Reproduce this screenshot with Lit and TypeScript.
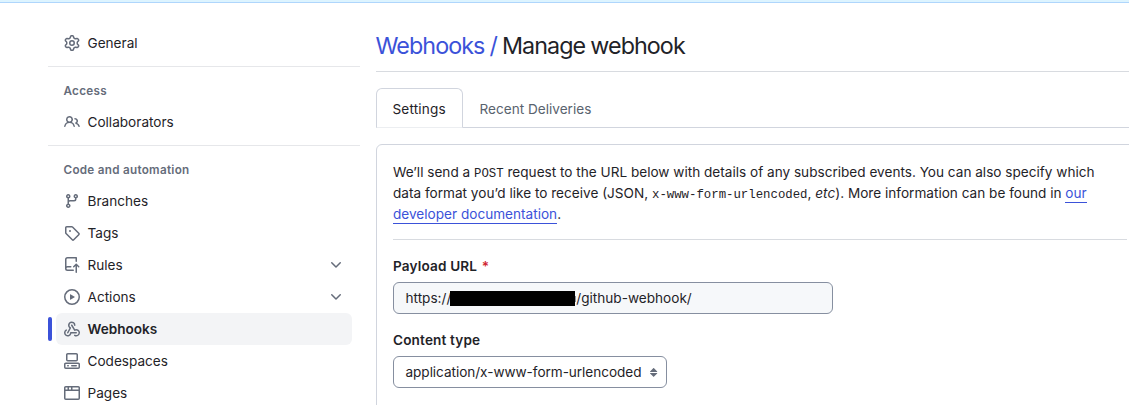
import { LitElement, html, css, svg } from "lit";
import { customElement, property } from "lit/decorators.js";

const ICONS: Record<string, string> = {
  gear: "M8 0a8.2 8.2 0 0 1 .701.031C9.444.095 9.99.645 10.16 1.29l.288 1.107c.018.066.079.158.212.224.231.114.454.243.668.386.123.082.233.09.299.071l1.103-.303c.644-.176 1.392.021 1.82.63.27.385.506.792.704 1.218.315.675.111 1.422-.364 1.891l-.814.806c-.049.048-.098.147-.088.294.016.257.016.515 0 .772-.01.147.038.246.088.294l.814.806c.475.469.679 1.216.364 1.891a7.977 7.977 0 0 1-.704 1.217c-.428.61-1.176.807-1.82.63l-1.102-.302c-.067-.019-.177-.011-.3.071a5.909 5.909 0 0 1-.668.386c-.133.066-.194.158-.211.224l-.29 1.106c-.168.646-.715 1.196-1.458 1.26a8.006 8.006 0 0 1-1.402 0c-.743-.064-1.289-.614-1.458-1.26l-.289-1.106c-.018-.066-.079-.158-.212-.224a5.738 5.738 0 0 1-.668-.386c-.123-.082-.233-.09-.299-.071l-1.103.303c-.644.176-1.392-.021-1.82-.63a8.12 8.12 0 0 1-.704-1.218c-.315-.675-.111-1.422.363-1.891l.815-.806c.05-.048.098-.147.088-.294a6.214 6.214 0 0 1 0-.772c.01-.147-.038-.246-.088-.294l-.815-.806C.635 6.045.431 5.298.746 4.623a7.92 7.92 0 0 1 .704-1.217c.428-.61 1.176-.807 1.82-.63l1.102.302c.067.019.177.011.3-.071.214-.143.437-.272.668-.386.133-.066.194-.158.211-.224l.29-1.106C6.009.645 6.556.095 7.299.03 7.53.01 7.764 0 8 0Zm-.571 1.525c-.036.003-.108.036-.137.146l-.289 1.105c-.147.561-.549.967-.998 1.189-.173.086-.34.183-.5.29-.417.278-.97.423-1.529.27l-1.103-.303c-.109-.03-.175.016-.195.045-.22.312-.412.644-.573.99-.014.031-.021.11.059.19l.815.806c.411.406.562.957.53 1.456a4.709 4.709 0 0 0 0 .582c.032.499-.119 1.05-.53 1.456l-.815.806c-.081.08-.073.159-.059.19.162.346.353.677.573.989.02.03.085.076.195.046l1.102-.303c.56-.153 1.113-.008 1.53.27.161.107.328.204.501.29.447.222.85.629.997 1.189l.289 1.105c.029.109.101.143.137.146a6.6 6.6 0 0 0 1.142 0c.036-.003.108-.036.137-.146l.289-1.105c.147-.561.549-.967.998-1.189.173-.086.34-.183.5-.29.417-.278.97-.423 1.529-.27l1.103.303c.109.029.175-.016.195-.045.22-.313.411-.644.573-.99.014-.031.021-.11-.059-.19l-.815-.806c-.411-.406-.562-.957-.53-1.456a4.709 4.709 0 0 0 0-.582c-.032-.499.119-1.05.53-1.456l.815-.806c.081-.08.073-.159.059-.19a6.464 6.464 0 0 0-.573-.989c-.02-.03-.085-.076-.195-.046l-1.102.303c-.56.153-1.113.008-1.53-.27a4.44 4.44 0 0 0-.501-.29c-.447-.222-.85-.629-.997-1.189l-.289-1.105c-.029-.11-.101-.143-.137-.146a6.6 6.6 0 0 0-1.142 0ZM11 8a3 3 0 1 1-6 0 3 3 0 0 1 6 0ZM9.5 8a1.5 1.5 0 1 0-3.001.001A1.5 1.5 0 0 0 9.5 8Z",
  people: "M2 5.5a3.5 3.5 0 1 1 5.898 2.549 5.508 5.508 0 0 1 3.034 4.084.75.75 0 1 1-1.482.235 4 4 0 0 0-7.9 0 .75.75 0 0 1-1.482-.236A5.507 5.507 0 0 1 3.102 8.05 3.493 3.493 0 0 1 2 5.5ZM11 4a3.001 3.001 0 0 1 2.22 5.018 5.01 5.01 0 0 1 2.56 3.012.749.749 0 0 1-.885.954.752.752 0 0 1-.549-.514 3.507 3.507 0 0 0-2.522-2.372.75.75 0 0 1-.574-.73v-.352a.75.75 0 0 1 .416-.672A1.5 1.5 0 0 0 11 5.5.75.75 0 0 1 11 4Zm-5.5-.5a2 2 0 1 0-.001 3.999A2 2 0 0 0 5.5 3.5Z",
  branch: "M9.5 3.25a2.25 2.25 0 1 1 3 2.122V6A2.5 2.5 0 0 1 10 8.5H6a1 1 0 0 0-1 1v1.128a2.251 2.251 0 1 1-1.5 0V5.372a2.25 2.25 0 1 1 1.5 0v1.836A2.493 2.493 0 0 1 6 7h4a1 1 0 0 0 1-1v-.628A2.25 2.25 0 0 1 9.5 3.25Zm-6 0a.75.75 0 1 0 1.5 0 .75.75 0 0 0-1.5 0Zm8.25-.75a.75.75 0 1 0 0 1.5.75.75 0 0 0 0-1.5ZM4.25 12a.75.75 0 1 0 0 1.5.75.75 0 0 0 0-1.5Z",
  tag: "M1 7.775V2.75C1 1.784 1.784 1 2.75 1h5.025c.464 0 .91.184 1.238.513l6.25 6.25a1.75 1.75 0 0 1 0 2.474l-5.026 5.026a1.75 1.75 0 0 1-2.474 0l-6.25-6.25A1.752 1.752 0 0 1 1 7.775Zm1.5 0c0 .066.026.13.073.177l6.25 6.25a.25.25 0 0 0 .354 0l5.025-5.025a.25.25 0 0 0 0-.354l-6.25-6.25a.25.25 0 0 0-.177-.073H2.75a.25.25 0 0 0-.25.25ZM6 5a1 1 0 1 1 0 2 1 1 0 0 1 0-2Z",
  repoPush: "M1 2.5A2.5 2.5 0 0 1 3.5 0h8.75a.75.75 0 0 1 .75.75v3.5a.75.75 0 0 1-1.5 0V1.5h-8a1 1 0 0 0-1 1v6.708A2.493 2.493 0 0 1 3.5 9h3.25a.75.75 0 0 1 0 1.5H3.5a1 1 0 0 0 0 2h5.75a.75.75 0 0 1 0 1.5H3.5A2.5 2.5 0 0 1 1 11.5Zm13.23 7.79-1.24-1.24v6.2a.75.75 0 0 1-1.5 0v-6.2l-1.24 1.24a.749.749 0 0 1-1.06-1.06l2.5-2.5a.747.747 0 0 1 1.06 0l2.5 2.5a.749.749 0 0 1-1.06 1.06Z",
  play: "M8 0a8 8 0 1 1 0 16A8 8 0 0 1 8 0ZM1.5 8a6.5 6.5 0 1 0 13 0 6.5 6.5 0 0 0-13 0Zm4.879-2.773 4.264 2.559a.25.25 0 0 1 0 .428l-4.264 2.559A.25.25 0 0 1 6 10.559V5.442a.25.25 0 0 1 .379-.215Z",
  webhook: "M5.5 4.25a2.25 2.25 0 0 1 4.5 0 .75.75 0 0 0 1.5 0 3.75 3.75 0 1 0-6.14 2.889l-2.272 4.258a.75.75 0 0 0 1.324.706L7 7.25a.75.75 0 0 0-.309-1.015A2.25 2.25 0 0 1 5.5 4.25ZM7.364 3.607a.75.75 0 0 1 1.03.257l2.608 4.349a3.75 3.75 0 1 1-.628 6.785.75.75 0 0 1 .752-1.299 2.25 2.25 0 1 0-.033-3.88.75.75 0 0 1-1.03-.256L7.107 4.636a.75.75 0 0 1 .257-1.03ZM2.9 8.776A.75.75 0 0 1 2.625 9.8 2.25 2.25 0 1 0 6 11.75a.75.75 0 0 1 .75-.751h5.5a.75.75 0 0 1 0 1.5H7.425a3.751 3.751 0 1 1-5.55-3.998.75.75 0 0 1 1.024.274Z",
  codespaces: "M0 11.25c0-.966.784-1.75 1.75-1.75h12.5c.966 0 1.75.784 1.75 1.75v3A1.75 1.75 0 0 1 14.25 16H1.75A1.75 1.75 0 0 1 0 14.25Zm2-9.5C2 .784 2.784 0 3.75 0h8.5C13.216 0 14 .784 14 1.75v5a1.75 1.75 0 0 1-1.75 1.75h-8.5A1.75 1.75 0 0 1 2 6.75Zm1.75-.25a.25.25 0 0 0-.25.25v5c0 .138.112.25.25.25h8.5a.25.25 0 0 0 .25-.25v-5a.25.25 0 0 0-.25-.25Zm-2 9.5a.25.25 0 0 0-.25.25v3c0 .138.112.25.25.25h12.5a.25.25 0 0 0 .25-.25v-3a.25.25 0 0 0-.25-.25ZM7 12.75a.75.75 0 0 1 .75-.75h4.5a.75.75 0 0 1 0 1.5h-4.5a.75.75 0 0 1-.75-.75Zm-4 0a.75.75 0 0 1 .75-.75h.5a.75.75 0 0 1 0 1.5h-.5a.75.75 0 0 1-.75-.75Z",
  browser: "M0 2.75C0 1.784.784 1 1.75 1h12.5c.966 0 1.75.784 1.75 1.75v10.5A1.75 1.75 0 0 1 14.25 15H1.75A1.75 1.75 0 0 1 0 13.25ZM14.5 6h-13v7.25c0 .138.112.25.25.25h12.5a.25.25 0 0 0 .25-.25Zm-6-3.5v2h6V2.75a.25.25 0 0 0-.25-.25ZM5 2.5v2h2v-2Zm-3.25 0a.25.25 0 0 0-.25.25V4.5h2v-2Z",
  chevron: "M12.78 5.22a.749.749 0 0 1 0 1.06l-4.25 4.25a.749.749 0 0 1-1.06 0L3.22 6.28a.749.749 0 1 1 1.06-1.06L8 8.939l3.72-3.719a.749.749 0 0 1 1.06 0Z",
  updown: "m4.074 9.427 3.396 3.396a.25.25 0 0 0 .354 0l3.396-3.396A.25.25 0 0 0 11.043 9H4.251a.25.25 0 0 0-.177.427ZM4.074 7.47 7.47 4.073a.25.25 0 0 1 .354 0L11.22 7.47a.25.25 0 0 1-.177.426H4.251a.25.25 0 0 1-.177-.426Z",
};

@customElement("oct-icon")
export class OctIcon extends LitElement {
  @property() name = "gear";
  static styles = css`
    :host { display: block; flex: none; width: 16px; height: 16px; color: #656c7a; }
    .glyph { display: block; fill: currentColor; }
  `;
  render() {
    return html`<svg class="glyph" width="16" height="16" viewBox="0 0 16 16">${svg`<path fill-rule="evenodd" d=${ICONS[this.name]}></path>`}</svg>`;
  }
}

interface NavItem { icon: string; label: string; expandable?: boolean; current?: boolean; }
interface NavGroup { title?: string; items: NavItem[]; }

const GROUPS: NavGroup[] = [
  { items: [{ icon: "gear", label: "General" }] },
  { title: "Access", items: [{ icon: "people", label: "Collaborators" }] },
  {
    title: "Code and automation",
    items: [
      { icon: "branch", label: "Branches" },
      { icon: "tag", label: "Tags" },
      { icon: "repoPush", label: "Rules", expandable: true },
      { icon: "play", label: "Actions", expandable: true },
      { icon: "webhook", label: "Webhooks", current: true },
      { icon: "codespaces", label: "Codespaces" },
      { icon: "browser", label: "Pages" },
    ],
  },
];

@customElement("settings-nav")
export class SettingsNav extends LitElement {
  static styles = css`
    :host { display: block; width: 312px; flex: none; }
    .group + .group { border-top: 1px solid #e6e7ea; margin-top: 7px; }
    .heading { display: flex; align-items: center; box-sizing: border-box; height: 39px; margin: 0; padding: 9px 15.5px 0;
      font-size: 11.7px; font-weight: 600; letter-spacing: 0.28px; color: #656c7a; }
    .row { display: flex; align-items: center; height: 32px; }
    .marker { width: 4px; height: 24px; border-radius: 6px; margin-right: 4px; flex: none; }
    .row.current .marker { background: #3b52d9; }
    .link { display: flex; align-items: center; gap: 7.5px; width: 296px; height: 32px; box-sizing: border-box; padding: 0 8px;
      border-radius: 6px; color: #1f2328; }
    .row.current .link { background: #f3f4f6; font-weight: 600; }
    .label { flex: 1; padding-top: 1px; }
  `;
  render() {
    return html`${GROUPS.map((g) => html`<section class="group">
      ${g.title ? html`<h3 class="heading">${g.title}</h3>` : null}
      ${g.items.map((i) => html`<div class="row ${i.current ? "current" : ""}">
        <span class="marker"></span>
        <a class="link"><oct-icon name=${i.icon}></oct-icon><span class="label">${i.label}</span>
        ${i.expandable ? html`<oct-icon name="chevron"></oct-icon>` : null}</a>
      </div>`)}
    </section>`)}`;
  }
}

@customElement("app-root")
export class AppRoot extends LitElement {
  static styles = css`
    :host { display: block; height: 405px; overflow: hidden; background: #fff; color: #1f2328;
      font-family: Inter, "Liberation Sans", sans-serif; font-size: 13.6px; line-height: 21px; }
    .banner { height: 2px; background: #ddf4ff; border-bottom: 1px solid #afd6fc; }
    .page { display: flex; gap: 16px; padding: 24px 0 0 48px; }
    .main { width: 768px; flex: none; }
    .title { margin: 0; height: 45px; padding-top: 1px; box-sizing: border-box; font-size: 23.3px; font-weight: 400; line-height: 36px;
      border-bottom: 1px solid #d8dbe0; letter-spacing: -0.93px; text-indent: -0.5px; word-spacing: -0.6px; }
    .title a, .text a { color: #3b52d9; }
    .tabs { display: flex; margin-top: 16px; height: 40px; box-sizing: border-box; border-bottom: 1px solid #d1d5de; }
    .tab { height: 40px; box-sizing: border-box; padding: 11px 16px 0 16.5px; color: #59636e; }
    .tab.active { border: 1px solid #d1d5de; border-bottom-color: #eceef1; border-radius: 6px 6px 0 0; background: #fff; color: #1f2328;
      padding: 10px 0 0 15.5px; width: 87px; letter-spacing: 0.15px; }
    .panel { margin-top: 16px; border: 1px solid #d1d5de; border-radius: 6px; padding: 17px 16px 16px; box-sizing: border-box; height: 334px; }
    .text { margin: 0; white-space: nowrap; }
    .text a { border-bottom: 1px solid #3b52d9; padding-bottom: 1px; }
    .code { font-family: "Liberation Mono", monospace; font-size: 12.35px; line-height: 0; }
    .rule { height: 1px; background: #d8dbe0; margin: 14px 0 16px; }
    .field { margin-bottom: 16px; }
    .caption { font-weight: 600; height: 21px; margin-bottom: 5px; letter-spacing: 0.15px; }
    .star { color: #cf222e; margin-left: 1px; }
    .input, .select { display: flex; align-items: center; height: 32px; box-sizing: border-box; border: 1px solid #868fa0; border-radius: 6px;
      padding: 0 11.5px; white-space: nowrap; }
    .input { width: 440px; background: #f6f8fa; }
    .select { width: 274px; padding-right: 4px; justify-content: space-between; letter-spacing: -0.05px; }
    .redaction { width: 125px; height: 15px; margin-left: -1px; background: #000; z-index: 1; }
    .stub { width: 1px; height: 6px; margin: 2px 0 0; background: #8c9299; }
  `;
  render() {
    return html`<div class="banner"></div>
      <div class="page">
        <settings-nav></settings-nav>
        <main class="main">
          <h2 class="title"><a>Webhooks /</a> Manage webhook</h2>
          <nav class="tabs"><a class="tab active">Settings</a><a class="tab">Recent Deliveries</a></nav>
          <section class="panel">
            <p class="text">We’ll send a <span class="code">POST</span> request to the URL below with details of any subscribed events. You can also specify which<br>data format you’d like to receive (JSON, <span class="code">x-www-form-urlencoded</span>, <em>etc</em>). More information can be found in <a>our</a><br><a>developer documentation</a>.</p>
            <div class="rule"></div>
            <div class="field"><div class="caption">Payload URL <span class="star">*</span></div>
              <div class="input"><span>https://</span><span class="redaction"></span><span class="stub"></span><span>/github-webhook/</span></div></div>
            <div class="field"><div class="caption">Content type</div>
              <div class="select"><span>application/x-www-form-urlencoded</span><oct-icon name="updown"></oct-icon></div></div>
          </section>
        </main>
      </div>`;
  }
}
